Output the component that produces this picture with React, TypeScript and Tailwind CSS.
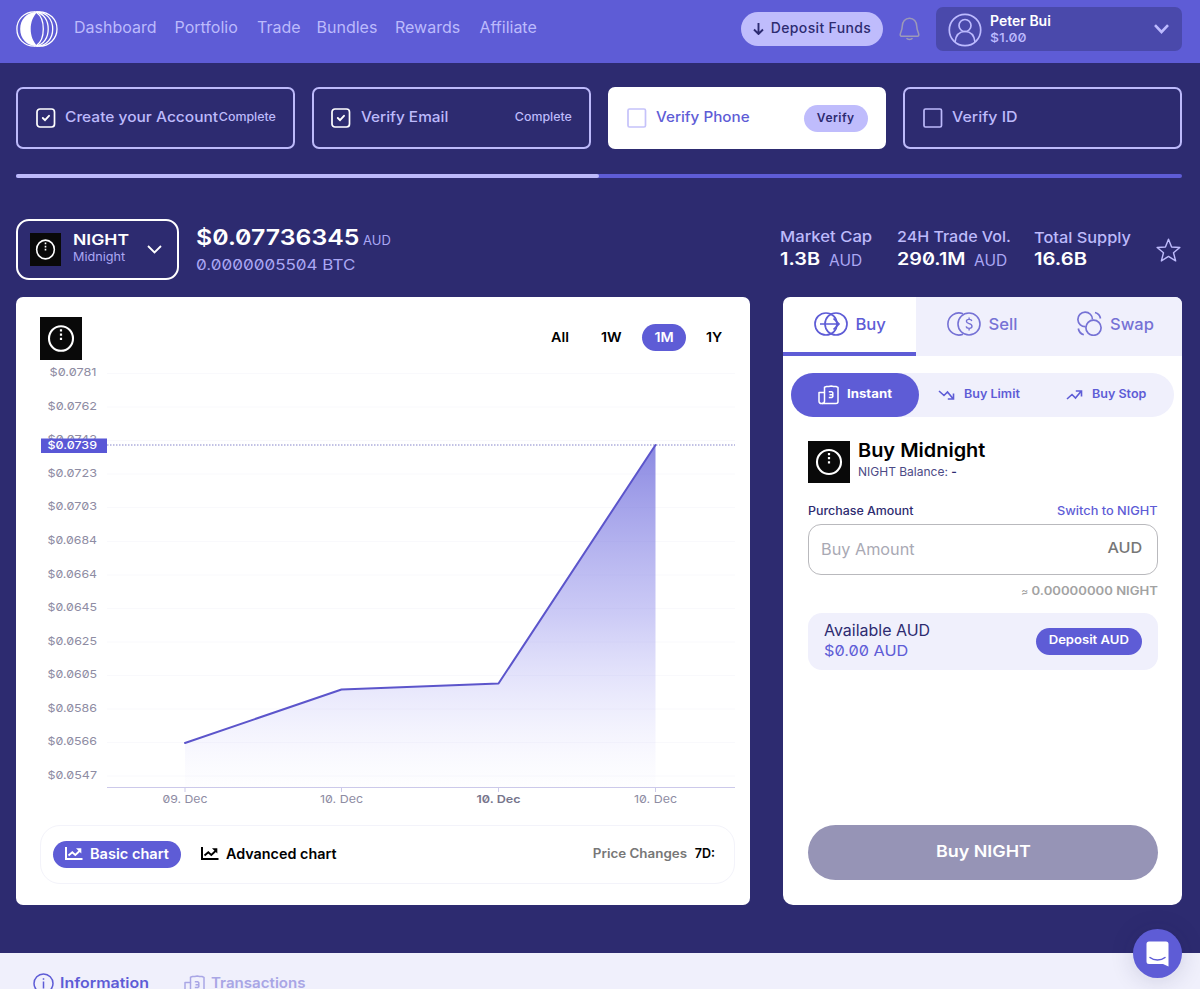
import React from "react";

const navItems = [
  { label: "Dashboard", width: "w-[84px]" },
  { label: "Portfolio", width: "w-[66px]" },
  { label: "Trade", width: "w-[43px]" },
  { label: "Bundles", width: "w-[62px]" },
  { label: "Rewards", width: "w-[68px]" },
  { label: "Affiliate", width: "w-[58px]" },
];

const yTicks = [
  { label: "$0.0781", y: 372.5 },
  { label: "$0.0762", y: 406 },
  { label: "$0.0742", y: 439.5 },
  { label: "$0.0723", y: 473 },
  { label: "$0.0703", y: 506.5 },
  { label: "$0.0684", y: 540.5 },
  { label: "$0.0664", y: 574 },
  { label: "$0.0645", y: 607.5 },
  { label: "$0.0625", y: 641 },
  { label: "$0.0605", y: 674.5 },
  { label: "$0.0586", y: 708 },
  { label: "$0.0566", y: 741.5 },
  { label: "$0.0547", y: 775 },
];

const xTicks = [
  { label: "09. Dec", x: 185, width: 45, bold: false },
  { label: "10. Dec", x: 341.5, width: 43, bold: false },
  { label: "10. Dec", x: 498.5, width: 44, bold: true },
  { label: "10. Dec", x: 655.5, width: 43, bold: false },
];

function Logo() {
  return (
    <svg className="h-[36px] w-[42px] shrink-0" viewBox="0 0 42 36" fill="none" stroke="#fff" strokeWidth="1.300">
      <path d="M18.500 .8C8 .8 .9 8.500 .9 18S8 35.200 18.500 35.200" />
      <path d="M21.500 1C10.500 1 4.200 8.500 4.200 18S10.500 35 21.500 35C17 31 14.700 24.500 14.700 18S17 5 21.500 1Z" fill="#fff" stroke="none" />
      <path d="M18 .8h5.500M18 35.200h5.500" />
      <path d="M20.500 1.500C25 4.500 27.300 11 27.300 18S25 31.500 20.500 34.500" />
      <path d="M20 1c8 1.500 12.200 8.500 12.200 17S28 33.500 20 35" />
      <path d="M21 .8c10 .5 15.700 8 15.700 17.200S31 34.700 21 35.200" />
      <path d="M23 .8c10.500 0 18 7.700 18 17.200s-7.500 17.200-18 17.200" />
    </svg>
  );
}

function TokenIcon({ className }: { className: string }) {
  return (
    <svg className={className} viewBox="0 0 42 42" preserveAspectRatio="none">
      <rect width="42" height="42" fill="#090909" />
      <circle cx="21" cy="21" r="12" fill="none" stroke="#fff" strokeWidth="2.100" />
      <path d="M19.900 12h2.200v2.200h-2.200zM19.900 16.100h2.200v2.200h-2.200zM19.900 20.200h2.200v2.200h-2.200z" fill="#fff" />
    </svg>
  );
}

function BuyIcon() {
  return (
    <svg className="h-[24px] w-[34px]" viewBox="0 0 34 24" fill="none" stroke="currentColor" strokeWidth="1.700">
      <circle cx="12" cy="12" r="11" />
      <circle cx="22" cy="12" r="11" />
      <path d="M6 12h19M19.500 6.500 25 12l-5.500 5.500" />
    </svg>
  );
}

function SellIcon() {
  return (
    <svg className="h-[24px] w-[34px]" viewBox="0 0 34 24" fill="none" stroke="currentColor" strokeWidth="1.600">
      <circle cx="22" cy="12" r="11" />
      <path d="M16 1.800A11 11 0 1 0 16 22.200" />
      <path d="M24.800 9c-.4-2.200-5.400-2.200-5.400.3 0 3 5.600 1.800 5.600 4.900 0 2.800-5.400 2.800-5.800.2M22.100 5.500v2M22.100 16.200v2.200" strokeWidth="1.400" />
    </svg>
  );
}

function SwapIcon() {
  return (
    <svg className="h-[25px] w-[25px]" viewBox="0 0 25 25" fill="none" stroke="currentColor" strokeWidth="1.700">
      <path d="M8.700 15.700A7.300 7.300 0 1 1 15.500 8.500" />
      <circle cx="16.500" cy="16.700" r="7.600" />
      <path d="M18 1.500c3 .8 5 3 5.500 6M1.300 17.500c.5 3 2.700 5.500 5.500 6.300" />
    </svg>
  );
}

function InstantIcon({ className }: { className: string }) {
  return (
    <svg className={className} viewBox="0 0 21 20" fill="none" stroke="currentColor" strokeWidth="1.500">
      <path d="M6.500 2.200 8.500 1.500 10.800 1.500 13.200 .9l2.400.6H18l2 .9V16.500a2 2 0 0 1-2 2H3.200A2.200 2.200 0 0 1 1 16.300V7.500h5.500z" strokeLinejoin="round" />
      <path d="M6.500 7.500v8.500c0 1.500-1 2.500-2.500 2.500M10.800 6.800h3l1 1v3.800l-1 1h-3M11.500 9.700h3" />
    </svg>
  );
}

function TrendIcon({ up }: { up?: boolean }) {
  return (
    <svg className={up ? "h-[10px] w-[17px]" : "h-[10px] w-[17px] -scale-y-100"} viewBox="0 0 17 10" fill="none" stroke="currentColor" strokeWidth="1.600">
      <path d="m1 9 5-4.500L9.500 8l5.800-7M9.800 1h5.700v5.500" />
    </svg>
  );
}

function ChartIcon() {
  return (
    <svg className="mt-[1px] h-[13px] w-[18px] shrink-0" viewBox="0 0 18 13" fill="none" stroke="currentColor">
      <path d="M1 0v12h16.500" strokeWidth="2" />
      <path d="m3.500 8.500 3.800-3.200 3 2.600 4.500-4.200" strokeWidth="1.900" />
      <path d="M11 1.200h5.300v5.300z" fill="currentColor" stroke="none" />
    </svg>
  );
}

function CheckBox({ checked, className }: { checked?: boolean; className: string }) {
  return (
    <svg className={"h-[20px] w-[20px] shrink-0 " + className} viewBox="0 0 20 20" fill="none" stroke="currentColor">
      <rect x="1" y="1" width="17.500" height="18" rx={checked ? 3 : 1.500} strokeWidth="1.700" />
      {checked && <path d="m6.800 10 2.200 2.200 4-4.400" strokeWidth="1.900" strokeLinecap="round" />}
    </svg>
  );
}

function Header() {
  return (
    <header className="flex h-[63px] items-start bg-[#5e5cd6] pl-4 pr-[18px]">
      <div className="mt-[11px] flex items-center">
        <Logo />
      </div>
      <nav className="ml-4 mt-[15px] flex gap-[16.500px] text-[16px] leading-6 text-[#bcbafc]">
        {navItems.map((n) => (
          <a key={n.label} className={"whitespace-nowrap " + n.width}>{n.label}</a>
        ))}
      </nav>
      <button className="ml-auto mt-3 flex h-[34px] w-[142px] items-center justify-center gap-[7px] whitespace-nowrap rounded-full bg-[#bfbcfc] pb-[3px] text-[14px] font-medium tracking-[0.025em] text-[#2d2b70]">
        <svg className="mt-[3px] h-[12px] w-[11px]" viewBox="0 0 11 12" fill="none" stroke="currentColor" strokeWidth="1.900"><path d="M5.500 0v11M1 6.500 5.500 11 10 6.500" /></svg>
        Deposit Funds
      </button>
      <svg className="ml-4 mt-[17px] h-[24px] w-[21px]" viewBox="0 0 21 24" fill="none" stroke="#9c99b8" strokeWidth="1.500">
        <path d="M3.200 9.500C3.200 4.500 6.300 1.200 10.500 1.200s7.300 3.300 7.300 8.300c0 4 2 6.200 2 8.200 0 1-.8 1.600-2 1.600H3.200c-1.200 0-2-.6-2-1.600 0-2 2-4.200 2-8.200Z" />
        <path d="M7.500 21.300c1.500 1.600 4.500 1.600 6 0" />
      </svg>
      <div className="ml-4 mt-[7px] flex h-[44px] w-[246px] items-center rounded-[7px] bg-[#4a49ab] pl-3 pr-3">
        <svg className="mt-[1px] h-[34px] w-[34px] shrink-0" viewBox="0 0 34 34" fill="none" stroke="#bdbbff" strokeWidth="1.700">
          <circle cx="17" cy="17" r="15.700" />
          <circle cx="17" cy="12.500" r="6" />
          <path d="M7 29c.8-6.500 4.500-10.500 10-10.500S26.200 22.500 27 29" />
        </svg>
        <div className="ml-[8px] leading-[17px]">
          <div className="text-[14px] font-semibold text-white">Peter Bui</div>
          <div className="origin-left scale-x-[1.160] text-[12px] font-medium text-[#bdbbff] slashed-zero">$1.00</div>
        </div>
        <svg className="ml-auto mr-[1px] h-[10px] w-[15px]" viewBox="0 0 15 10" fill="none" stroke="#bdbbff" strokeWidth="2.600"><path d="m1 1.200 6.500 6.800L14 1.200" /></svg>
      </div>
    </header>
  );
}

function Steps() {
  const base = "flex h-[62px] items-center rounded-[7px] border-2 pl-[17.500px] pr-[16.500px]";
  return (
    <>
      <div className="mt-[24px] grid grid-cols-4 gap-[17px] text-[14.500px] font-medium text-[#bdbafb]">
        <div className={base + " border-[#bdbafb]"}>
          <CheckBox checked className="text-white" />
          <span className="-mt-[2px] ml-[9px] origin-left scale-x-[1.070] whitespace-nowrap">Create your Account</span>
          <span className="ml-auto origin-right scale-x-[1.080] text-[11.500px]">Complete</span>
        </div>
        <div className={base + " border-[#bdbafb]"}>
          <CheckBox checked className="text-white" />
          <span className="-mt-[2px] ml-[9.500px] origin-left scale-x-[1.060]">Verify Email</span>
          <span className="ml-auto origin-right scale-x-[1.080] text-[11.500px]">Complete</span>
        </div>
        <div className={base + " border-white bg-white"}>
          <CheckBox className="text-[#c5c2fa]" />
          <span className="-mt-[2px] ml-[9px] origin-left scale-x-[1.050] text-[#5e5cd6]">Verify Phone</span>
          <span className="ml-auto flex h-[27px] w-[64px] items-center justify-center rounded-full bg-[#bfbcfc] pb-[1px] text-[12px] font-semibold tracking-[0.040em] text-[#2d2b70]">Verify</span>
        </div>
        <div className={base + " border-[#bdbafb]"}>
          <CheckBox className="text-[#bdbafb]" />
          <span className="-mt-[2px] ml-[9px] origin-left scale-x-[1.100]">Verify ID</span>
        </div>
      </div>
      <div className="mt-[25px] h-1 rounded-full bg-[#5e5cd6]">
        <div className="h-1 w-1/2 rounded-full bg-[#bdbafb]" />
      </div>
    </>
  );
}

function MarketRow() {
  return (
    <div className="mt-[41px] flex h-[61px] items-start text-[#bdbafb]">
      <div className="flex h-[61px] w-[163px] items-center rounded-[13px] border-2 border-white pl-3 pr-[15px]">
        <TokenIcon className="h-[33px] w-[31px] shrink-0" />
        <div className="-mt-[3px] ml-3">
          <div className="origin-left scale-x-[1.170] text-[15px] font-semibold leading-[18px] text-white">NIGHT</div>
          <div className="origin-left scale-x-[1.100] text-[11.500px] leading-[16px] text-[#aaa7f4]">Midnight</div>
        </div>
        <svg className="ml-auto h-[9px] w-[15px]" viewBox="0 0 15 9" fill="none" stroke="#fff" strokeWidth="1.800"><path d="m1 1 6.500 6.500L14 1" /></svg>
      </div>
      <div className="ml-[17px] whitespace-nowrap slashed-zero text-[#aaa7f4]">
        <div className="mt-[3px] flex items-baseline leading-[30px]">
          <span className="w-[167px]"><span className="inline-block origin-left scale-x-[1.130] text-[22px] font-semibold text-white">$0.07736345</span></span>
          <span className="text-[13px]">AUD</span>
        </div>
        <div className="w-max origin-left scale-x-[1.215] text-[14px] leading-5">0.0000005504 BTC</div>
      </div>
      <div className="ml-auto mt-2 flex whitespace-nowrap text-[15px] slashed-zero">
        <div className="w-[116.500px]">
          <div className="w-max origin-left scale-x-[1.110] font-medium leading-5">Market Cap</div>
          <div className="mt-[2px] flex items-baseline leading-5"><span className="w-[49px]"><span className="inline-block origin-left scale-x-[1.170] text-[17px] font-semibold text-white">1.3B</span></span><span className="translate-y-px text-[15.500px] text-[#aaa7f4]">AUD</span></div>
        </div>
        <div className="w-[137.500px]">
          <div className="w-max origin-left scale-x-[1.070] font-medium leading-5">24H Trade Vol.</div>
          <div className="mt-[2px] flex items-baseline leading-5"><span className="w-[77.500px]"><span className="inline-block origin-left scale-x-[1.160] text-[17px] font-semibold text-white">290.1M</span></span><span className="translate-y-px text-[15.500px] text-[#aaa7f4]">AUD</span></div>
        </div>
        <div className="w-[98px]">
          <div className="w-max origin-left scale-x-[1.090] font-medium leading-[21px]">Total Supply</div>
          <div className="leading-[22px]"><span className="inline-block origin-left scale-x-[1.190] text-[17px] font-semibold text-white">16.6B</span></div>
        </div>
      </div>
      <svg className="ml-[24px] mr-[1px] mt-[19px] h-[25px] w-[25px]" viewBox="0 0 26 26" fill="none" stroke="#bdbafb" strokeWidth="1.500" strokeLinejoin="round">
        <path d="m13 1.300 3.200 8 8.600.6-6.600 5.500 2.200 8.400-7.400-4.600-7.400 4.600 2.200-8.400-6.600-5.500 8.600-.6z" />
      </svg>
    </div>
  );
}

function PriceChart() {
  return (
    <svg className="block h-[445px] w-[734px] slashed-zero" viewBox="16 364 734 445" fontFamily="Inter, sans-serif" fontSize="11">
      <defs>
        <linearGradient id="area" x1="0" y1="445" x2="0" y2="787" gradientUnits="userSpaceOnUse">
          <stop offset="0" stopColor="#5e5cd6" stopOpacity=".72" />
          <stop offset=".5" stopColor="#807de8" stopOpacity=".4" />
          <stop offset=".8" stopColor="#a9a7f5" stopOpacity=".17" />
          <stop offset="1" stopColor="#f2f2fd" stopOpacity=".1" />
        </linearGradient>
      </defs>
      {yTicks.map((t, i) => (
        <g key={t.label}>
          <line x1="107" x2="735" y1={t.y + 1} y2={t.y + 1} stroke="#f9f9fc" />
          <text x={i === 0 ? 49.5 : 47.5} y={t.y + 3.5} textLength={i === 0 ? 47 : 49.500} lengthAdjust="spacingAndGlyphs" fill="#8e8ca3">{t.label}</text>
        </g>
      ))}
      <path d="M185 743 341.500 689.500 498.500 683.500 655.500 445V787H185Z" fill="url(#area)" />
      <line x1="107" x2="735" y1="445" y2="445" stroke="#8584c9" strokeDasharray="1.500 1.500" />
      <path d="M185 743 341.500 689.500 498.500 683.500 655.500 445" fill="none" stroke="#5c55cb" strokeWidth="2" strokeLinejoin="round" strokeLinecap="round" />
      <path d="M107 787.500H735" stroke="#ccc9ea" />
      <rect x="41" y="438.500" width="66" height="14.500" fill="#5957d6" />
      <text x="47.500" y="449" textLength="49.500" lengthAdjust="spacingAndGlyphs" fill="#fff" fontWeight="500">$0.0739</text>
      {xTicks.map((t) => (
        <g key={t.x}>
          <line x1={t.x} x2={t.x} y1="788" y2="792" stroke="#ccc9ea" />
          <text x={t.x - t.width / 2} y="803" fontSize="11" textLength={t.width} lengthAdjust="spacingAndGlyphs" fill={t.bold ? "#77758c" : "#8e8ca3"} fontWeight={t.bold ? 600 : 400}>{t.label}</text>
        </g>
      ))}
    </svg>
  );
}

function ChartPanel() {
  return (
    <section className="flex h-[608px] w-[734px] flex-col rounded-[7px] bg-white">
      <div className="flex h-[67px] items-start pl-[23.500px] pt-5">
        <TokenIcon className="h-[43px] w-[42px]" />
        <div className="ml-auto mt-[7px] flex h-[27px] items-center text-[13.500px] font-semibold text-black">
          <span className="w-[50px]"><span className="inline-block origin-left scale-x-[1.060]">All</span></span>
          <span className="w-[41px]"><span className="inline-block origin-left scale-x-[1.060]">1W</span></span>
          <span className="flex h-[27px] w-[44px] items-center justify-center rounded-full bg-[#5e5cd6] text-white"><span className="scale-x-[1.060]">1M</span></span>
          <span className="w-[64px] pl-5"><span className="inline-block origin-left scale-x-[1.060]">1Y</span></span>
        </div>
      </div>
      <PriceChart />
      <div className="ml-[23.500px] mr-[15px] mt-[16px] flex h-[59px] items-center rounded-[20px] border border-[#f3f3fa] pl-[12.500px] pr-[19px] text-[14px] font-semibold">
        <div className="flex h-[27px] w-[128px] items-center gap-[7px] whitespace-nowrap rounded-full bg-[#5e5cd6] pb-[2px] pl-3 text-white">
          <ChartIcon /><span className="origin-left scale-x-[1.040]">Basic chart</span>
        </div>
        <div className="ml-5 flex items-center gap-[7px] pb-[2px] text-black"><ChartIcon /><span className="origin-left scale-x-[1.025]">Advanced chart</span></div>
        <div className="ml-auto flex translate-y-px gap-[8px] pb-[1px] text-[12.500px]"><span className="origin-right scale-x-[1.070] text-[#777]">Price Changes</span><span className="text-black">7D:</span></div>
      </div>
    </section>
  );
}

function TradePanel() {
  return (
    <section className="flex h-[608px] w-[399px] flex-col overflow-hidden rounded-[10px] rounded-t-[7px] bg-white">
      <div className="grid h-[59px] shrink-0 grid-cols-3 text-[16px] font-medium text-[#5e5cd6]">
        <div className="flex items-center justify-center gap-2 border-b-4 border-[#5e5cd6] pb-[1px]"><BuyIcon /><span className="scale-x-[1.040]">Buy</span></div>
        <div className="flex items-center justify-center gap-2 bg-[#f0f0fc] pb-[5px] pr-[1px] text-[#7672d5]"><SellIcon /><span className="scale-x-[1.040]">Sell</span></div>
        <div className="flex items-center justify-center gap-2 bg-[#f0f0fc] pb-[5px] pr-[2px] text-[#7672d5]"><SwapIcon /><span className="origin-left scale-x-[1.030]">Swap</span></div>
      </div>
      <div className="mx-2 mt-[17px] flex h-[44px] shrink-0 rounded-full bg-[#f0f0fc] text-[11.500px] font-semibold text-[#5e5cd6]">
        <div className="flex w-[128px] items-center justify-center gap-[8px] rounded-full bg-[#5e5cd6] pr-[5px] font-bold text-white"><InstantIcon className="h-[20px] w-[21px]" /><span className="origin-left scale-x-[1.150]">Instant</span></div>
        <div className="flex w-[121px] items-center justify-center gap-[9px] pr-[6px]"><TrendIcon /><span className="origin-left scale-x-[1.090]">Buy Limit</span></div>
        <div className="flex flex-1 items-center justify-center gap-[9px] pr-[6px]"><TrendIcon up /><span className="origin-left scale-x-[1.090]">Buy Stop</span></div>
      </div>
      <div className="flex flex-1 flex-col pl-[25px] pr-6 pt-6">
        <div className="flex">
          <TokenIcon className="h-[42px] w-[42px]" />
          <div className="ml-2">
            <div className="-mt-[3px] origin-left scale-x-[1.050] text-[19px] font-semibold leading-[26px] text-black">Buy Midnight</div>
            <div className="text-[12px] leading-4 text-[#4c4a86]">NIGHT Balance: <span className="font-semibold text-[#2d2b70]">-</span></div>
          </div>
        </div>
        <div className="mt-[20px] flex justify-between text-[11.500px] font-medium leading-4">
          <span className="origin-left scale-x-[1.080] text-[#2d2b70]">Purchase Amount</span><span className="origin-right scale-x-[1.110] text-[#5e5cd6]">Switch to NIGHT</span>
        </div>
        <div className="mt-[5px] flex h-[51px] items-center justify-between rounded-[13px] border border-[#b9b9bd] pb-[1px] pl-3 pr-[15px] text-[16px]">
          <span className="origin-left scale-x-[1.015] text-[#a9a9b4]">Buy Amount</span><span className="origin-right scale-x-[1.080] text-[15px] font-medium text-[#777]">AUD</span>
        </div>
        <div className="mt-[8px] origin-right scale-x-[1.140] text-right text-[11.500px] font-semibold leading-4 text-[#a2a2a2]"><span className="text-[9px]">≈</span> 0.00000000 NIGHT</div>
        <div className="mt-[13px] flex h-[57px] items-center justify-between rounded-[14px] bg-[#f0f0fc] px-4">
          <div className="leading-5"><div className="origin-left scale-x-[1.030] text-[15.500px] text-[#2d2b70]">Available AUD</div><div className="w-max origin-left scale-x-[1.160] text-[14px] text-[#5e5cd6] slashed-zero">$0.00 AUD</div></div>
          <div className="flex h-[27px] w-[106px] items-center justify-center rounded-full bg-[#5e5cd6] pb-[2px] text-[12px] font-semibold text-white"><span className="scale-x-[1.090]">Deposit AUD</span></div>
        </div>
        <button className="mb-[25px] mt-auto flex h-[55px] items-center justify-center rounded-full bg-[#9694b6] pb-[3px] text-[16px] font-semibold text-white"><span className="scale-x-[1.120]">Buy NIGHT</span></button>
      </div>
    </section>
  );
}

export default function App() {
  return (
    <div className="relative flex h-[989px] w-[1200px] flex-col overflow-hidden bg-[#2d2b70] font-['Inter',sans-serif]">
      <Header />
      <main className="h-[890px] shrink-0 pl-4 pr-[18px]">
        <Steps />
        <MarketRow />
        <div className="mt-[16.500px] flex justify-between">
          <ChartPanel />
          <TradePanel />
        </div>
      </main>
      <div className="flex h-[36px] shrink-0 items-start overflow-hidden bg-[#f0f0fc] pl-[33px] pt-[20px] text-[14.500px] font-semibold leading-5 text-[#5e5cd6]">
        <div className="flex w-[151px] gap-[6px]">
          <svg className="h-[21px] w-[21px]" viewBox="0 0 21 21" fill="none" stroke="currentColor" strokeWidth="1.500"><circle cx="10.500" cy="10.500" r="9.500" /><path d="M10.500 8.500v7M10.500 5.300v1.500" /></svg>
          <span className="origin-left scale-x-[1.100]">Information</span>
        </div>
        <div className="flex gap-[6px] text-[#a9a6e5]"><InstantIcon className="mt-[2px] h-[20px] w-[21px]" /><span className="origin-left scale-x-[1.040]">Transactions</span></div>
      </div>
      <div className="absolute left-[1133px] top-[929px] flex h-[49px] w-[49px] items-center justify-center rounded-full bg-[#5e5cd6] shadow-[0_2px_24px_rgba(30,28,80,0.160)]">
        <svg className="h-[26px] w-[23px]" viewBox="0 0 23 26"><path d="M3 .500h17a2.500 2.500 0 0 1 2.500 2.500v22.500L17 23H3a2.500 2.500 0 0 1-2.500-2.500V3A2.500 2.500 0 0 1 3 .500Z" fill="#fff" /><path d="M4 16.500c4 3.300 11 3.300 15 0" fill="none" stroke="#5e5cd6" strokeWidth="1.500" strokeLinecap="round" /></svg>
      </div>
    </div>
  );
}
